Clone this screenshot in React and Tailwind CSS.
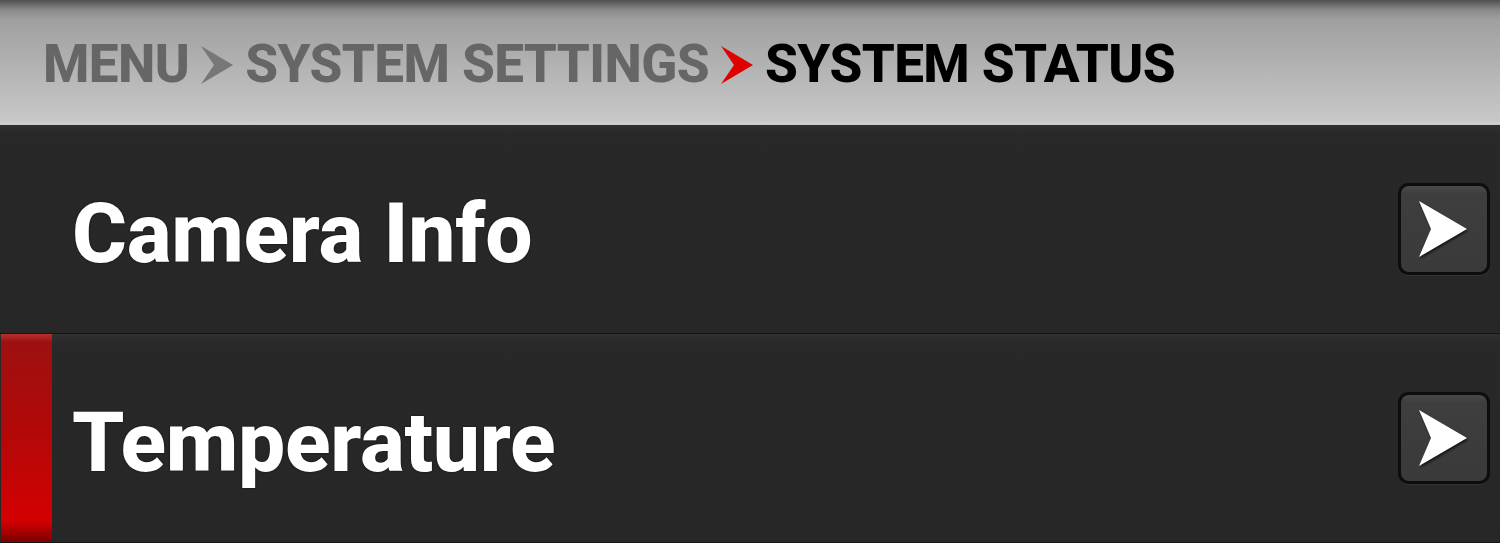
const Chevron = ({ color, className }) => (
  <svg viewBox="0 0 32 38" className={className}>
    <polygon points="0,0 32,19 0,38 13,19" fill={color} />
  </svg>
);

const ArrowButton = () => (
  <div className="w-[92px] h-[92px] rounded-[10px] bg-[#0d0d0d] p-[3px] shadow-[0_1px_0_#333]">
    <div className="w-full h-full rounded-[8px] bg-[linear-gradient(to_bottom,#4a4a4a_0px,#3e3e3e_8px,#3a3a3a_100%)] flex items-center justify-center">
      <svg viewBox="0 0 48 56" className="w-[48px] h-[56px] ml-[-2px] drop-shadow-[1px_2px_1px_rgba(0,0,0,0.6)]">
        <polygon points="0,0 48,28 0,56 12,28" fill="#ffffff" />
      </svg>
    </div>
  </div>
);

const Row = ({ label, active }) => (
  <div className="h-[209px] flex bg-[linear-gradient(to_bottom,#303030_0px,#282828_10px,#272727_100%)] border-b border-[#151515]">
    <div
      className={
        active
          ? 'w-[51px] ml-[1px] bg-[linear-gradient(to_bottom,#b83030_0px,#9e1010_8px,#b50808_50%,#d40000_90%,#7a0000_100%)]'
          : 'w-[52px]'
      }
    />
    <div className="flex-1 flex items-center justify-between pl-[20px] pr-[10px]">
      <span className="text-white font-extrabold text-[84px] leading-none tracking-[-0.3px] pt-[10px] [text-shadow:0_0_2px_rgba(0,0,0,0.8)]">
        {label}
      </span>
      <ArrowButton />
    </div>
  </div>
);

export default function App() {
  return (
    <div className="w-[1500px] h-[543px] overflow-hidden bg-[#272727] font-['Roboto','Liberation_Sans',sans-serif]">
      <div className="h-[125px] bg-[linear-gradient(to_bottom,#505050_0px,#8a8a8a_10px,#a0a0a0_20px,#b4b4b4_70px,#c8c8c8_122px,#d2d2d2_123px,#c4c4c4_125px)] flex items-center pl-[43px] pt-[4px]">
        <div className="flex items-center font-extrabold text-[53px] leading-none tracking-[-0.6px]">
          <span className="text-[#666666]">MENU</span>
          <Chevron color="#777777" className="w-[32px] h-[38px] mx-[12px]" />
          <span className="text-[#666666]">SYSTEM SETTINGS</span>
          <Chevron color="#e00000" className="w-[32px] h-[38px] mx-[12px]" />
          <span className="text-black">SYSTEM STATUS</span>
        </div>
      </div>
      <Row label="Camera Info" />
      <Row label="Temperature" active />
    </div>
  );
}
